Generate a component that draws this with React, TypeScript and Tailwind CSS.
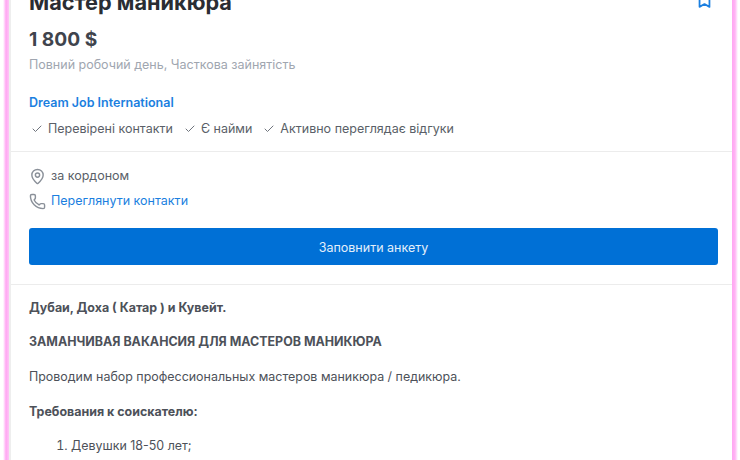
import React from "react";
import { Check, MapPin, Phone, Bookmark } from "lucide-react";

const perks = ["Перевірені контакти", "Є найми", "Активно переглядає відгуки"];

const App: React.FC = () => {
  return (
    <div className="flex h-[460px] w-[740px] overflow-hidden bg-white font-['Inter',sans-serif]">
      <div className="ml-[3px] w-[6px] shrink-0 bg-linear-to-r from-white via-[#ffa6f2] to-[#ffc4f6]" />
      <div className="h-full min-w-0 flex-1 overflow-hidden border-l-2 border-[#eeeeee] bg-white">
        <div className="border-b border-[#ececec] pr-[14px] pb-[12px] pl-[18px]">
          <div className="-mt-[12px] flex items-start justify-between">
            <h1 className="text-[21.7px] leading-[28px] font-bold text-[#2a2d33]">Мастер маникюра</h1>
            <Bookmark className="mt-[4px] mr-[5px] h-[17px] w-[17px] text-[#1b7fe0]" strokeWidth={2.5} />
          </div>
          <div className="mt-[10px] text-[19.2px] leading-[26px] font-bold text-[#3f444d]">1 800 $</div>
          <div className="mt-[3px] text-[12.5px] leading-[20px] text-[#a0a6b0]">Повний робочий день, Часткова зайнятість</div>
          <div className="mt-[18px] text-[12.5px] leading-[20px] font-semibold text-[#1b7fe0]">Dream Job International</div>
          <ul className="mt-[6px] flex gap-[9px] text-[12.5px] leading-[20px] text-[#5a5f68]">
            {perks.map((perk) => (
              <li key={perk} className="flex items-center gap-[5px]">
                <Check className="ml-[2px] h-[12px] w-[12px] text-[#6f747d]" strokeWidth={2} />
                {perk}
              </li>
            ))}
          </ul>
        </div>
        <div className="border-b border-[#ececec] pt-[14px] pr-[14px] pb-[19px] pl-[18px]">
          <div className="flex h-[20px] items-center gap-[5px] text-[12.5px] text-[#5a5f68]">
            <MapPin className="h-[17px] w-[17px] text-[#8a9099]" strokeWidth={2} />
            за кордоном
          </div>
          <div className="mt-[5px] flex h-[20px] items-center gap-[5px] text-[12.5px] text-[#1b7fe0]">
            <Phone className="h-[17px] w-[17px] text-[#8a9099]" strokeWidth={2} />
            Переглянути контакти
          </div>
          <button className="mt-[17px] h-[37px] w-full rounded-[3px] bg-[#0070d6] pt-[3px] text-[12.5px] text-[#e3effa]">Заповнити анкету</button>
        </div>
        <div className="pt-[13px] pr-[14px] pl-[18px] text-[12.44px] leading-[20px] text-[#4d5159]">
          <p className="font-bold">Дубаи, Доха ( Катар ) и Кувейт.</p>
          <p className="mt-[14px] font-bold">ЗАМАНЧИВАЯ ВАКАНСИЯ ДЛЯ МАСТЕРОВ МАНИКЮРА</p>
          <p className="mt-[15px]">Проводим набор профессиональных мастеров маникюра / педикюра.</p>
          <p className="mt-[15px] font-bold">Требования к соискателю:</p>
          <ol className="mt-[12px] list-decimal pl-[42px] leading-[23px]">
            <li>Девушки 18-50 лет;</li>
            <li>Минимальный опыт работы 2 года;</li>
          </ol>
        </div>
      </div>
      <div className="mr-[2px] w-[6px] shrink-0 bg-linear-to-r from-[#ffa6f2] via-[#ffb4f4] to-white" />
    </div>
  );
};

export default App;
